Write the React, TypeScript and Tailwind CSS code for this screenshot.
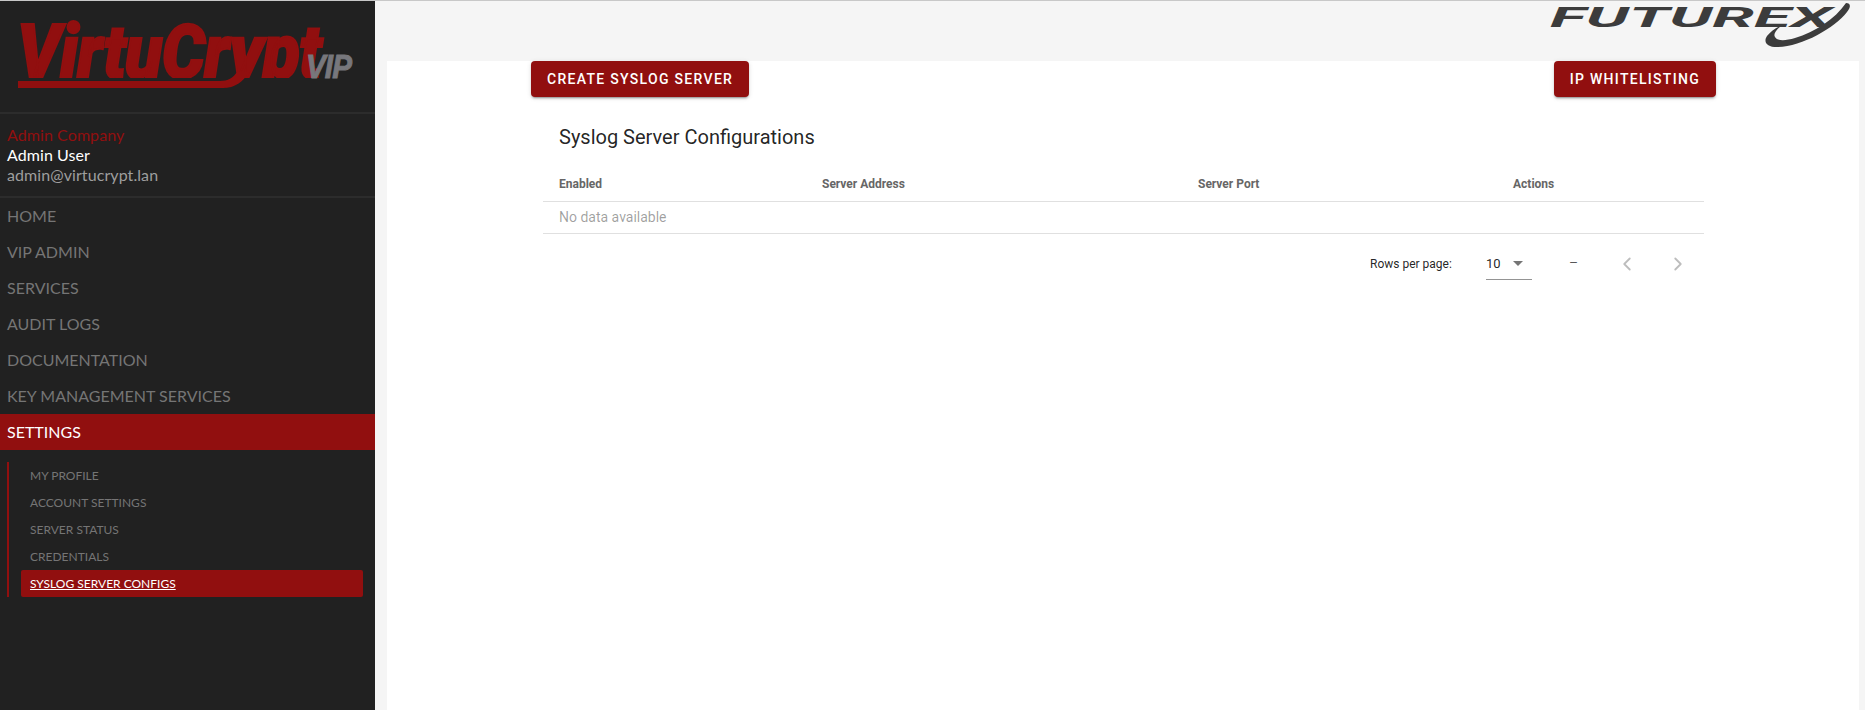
import {ChevronLeft, ChevronRight} from "lucide-react";

const navItems = [
  "HOME",
  "VIP ADMIN",
  "SERVICES",
  "AUDIT LOGS",
  "DOCUMENTATION",
  "KEY MANAGEMENT SERVICES",
];

const subItems = ["MY PROFILE", "ACCOUNT SETTINGS", "SERVER STATUS", "CREDENTIALS"];

const VirtuCryptLogo = () => (
  <div className="relative h-[111px] w-full overflow-hidden">
    <div className="absolute inset-x-0 top-0 h-[77px] overflow-hidden">
      <span className="absolute left-[17px] top-[13px] origin-top-left scale-x-[0.9] font-[Roboto] text-[76px] leading-[76px] font-black italic tracking-[-1px] text-[#910f0f] [-webkit-text-stroke:2px_#910f0f]">
        VirtuCrypt
      </span>
    </div>
    <svg className="absolute left-[18px] top-[70px]" width="240" height="20" viewBox="0 0 240 20">
      <path d="M0 10h202c8 0 13-3 17-9h12c-6 10-14 16-26 16H0z" fill="#910f0f" />
    </svg>
    <span className="absolute left-[306px] top-[46px] origin-top-left scale-x-[0.87] font-['Liberation_Sans'] text-[34px] leading-[38px] font-bold italic tracking-[-1px] text-[#77777c] [-webkit-text-stroke:1px_#77777c]">
      VIP
    </span>
  </div>
);

const FuturexLogo = () => (
  <div className="relative h-[48px] w-[305px]">
    <span className="absolute left-[-2px] top-[3px] origin-top-left scale-x-[2.4] font-[Roboto] text-[28px] leading-[28px] font-bold italic text-[#3c3c3c]">
      FUTUREX
    </span>
    <svg className="absolute left-[211px] top-0" width="90" height="48" viewBox="0 0 90 48">
      <path d="M83 2c5 0 5 4 1 9C72 27 38 46 14 46 4 46 0 41 4 35c3-4 8-8 15-11-6 5-9 9-7 12 2 4 10 4 20 1C52 31 72 18 83 2z" fill="#3c3c3c" />
    </svg>
  </div>
);

const Sidebar = () => (
  <aside className="flex h-full w-[375px] shrink-0 flex-col bg-[#212121] font-[Lato]">
    <VirtuCryptLogo />
    <div className="flex h-[86px] flex-col justify-center border-y-2 border-[#2c2c2c] px-[7px] text-[16px] leading-[20px] tracking-[0.08px]">
      <div className="text-[#910f0f]">Admin Company</div>
      <div className="text-white">Admin User</div>
      <div className="text-[#9e9e9e]">admin@virtucrypt.lan</div>
    </div>
    <nav className="flex flex-col">
      {navItems.map((item) => (
        <div key={item} className="flex h-[36px] items-center px-[7px] text-[16px] text-[#757575]">
          {item}
        </div>
      ))}
      <div className="flex h-[36px] items-center bg-[#910f0f] px-[7px] text-[16px] text-white">
        SETTINGS
      </div>
    </nav>
    <div className="ml-[7px] mt-[12px] mr-[12px] flex flex-col border-l-2 border-[#910f0f] pl-[12px] text-[12px]">
      {subItems.map((item) => (
        <div key={item} className="flex h-[27px] items-center pl-[9px] text-[#757575]">
          {item}
        </div>
      ))}
      <div className="flex h-[27px] items-center rounded-[2px] bg-[#910f0f] pl-[9px] text-white underline">
        SYSLOG SERVER CONFIGS
      </div>
    </div>
  </aside>
);

const Button = ({label}: {label: string}) => (
  <button className="flex h-[36px] items-center rounded-[4px] bg-[#910f0f] px-[16px] text-[14px] font-medium tracking-[1.3px] text-white shadow-[0_3px_1px_-2px_rgba(0,0,0,0.2),0_2px_2px_0_rgba(0,0,0,0.14),0_1px_5px_0_rgba(0,0,0,0.12)]">
    {label}
  </button>
);

const SyslogTable = () => (
  <div className="ml-[144px] mr-[143px] flex flex-1 flex-col">
    <div className="flex justify-between">
      <Button label="CREATE SYSLOG SERVER" />
      <Button label="IP WHITELISTING" />
    </div>
    <div className="ml-[12px] mr-[12px]">
      <div className="flex h-[65px] items-center px-[16px] pt-[14px] text-[20px] leading-[32px] text-[rgba(0,0,0,0.87)]">
        Syslog Server Configurations
      </div>
      <div className="grid h-[40px] grid-cols-[265px_375px_330px_1fr] items-center border-b border-[#e0e0e0] pt-[5px] text-[12px] font-bold text-[#666]">
        <div className="pl-[16px]">Enabled</div>
        <div className="pl-[14px]">Server Address</div>
        <div className="pl-[15px]">Server Port</div>
        <div className="pl-0">Actions</div>
      </div>
      <div className="flex h-[32px] items-center border-b border-[#e0e0e0] px-[16px] text-[14px] text-[rgba(0,0,0,0.38)]">
        No data available
      </div>
      <div className="flex h-[59px] items-center text-[12px] text-[rgba(0,0,0,0.87)]">
        <span className="ml-[827px] w-[116px]">Rows per page:</span>
        <div className="flex h-[32px] w-[46px] items-center justify-between border-b border-[#949494] pr-[9px] text-[13px]">
          <span className="pt-[1px]">10</span>
          <span className="h-0 w-0 border-x-[5px] border-t-[5px] border-x-transparent border-t-[#757575]" />
        </div>
        <span className="ml-[37px] w-[47px] text-[14px] font-light">–</span>
        <ChevronLeft className="text-[#bdbdbd]" size={22} strokeWidth={2} />
        <ChevronRight className="ml-[29px] text-[#bdbdbd]" size={22} strokeWidth={2} />
      </div>
    </div>
  </div>
);

export default function App() {
  return (
    <div className="flex h-[710px] w-[1865px] overflow-hidden border-t border-[#c8c8c8] bg-[#f5f5f5] font-[Roboto]">
      <Sidebar />
      <main className="flex min-w-0 flex-1 flex-col">
        <header className="flex h-[60px] shrink-0 justify-end pr-[8px]">
          <FuturexLogo />
        </header>
        <section className="ml-[12px] mr-[6px] flex flex-1 bg-white">
          <SyslogTable />
        </section>
      </main>
    </div>
  );
}
